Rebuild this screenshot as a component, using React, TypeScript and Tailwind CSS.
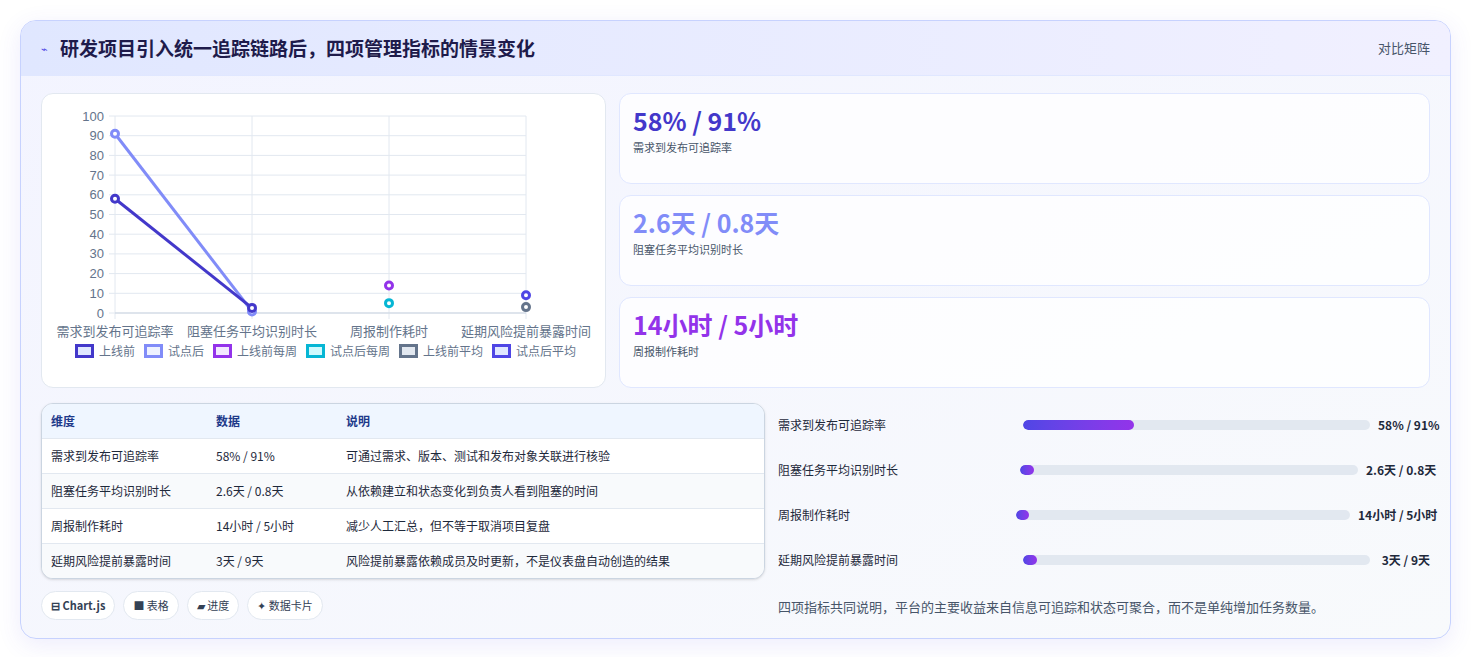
import React from "react";

const F = '"Noto Sans CJK SC", "Noto Sans", sans-serif';

function Chart() {
  const x0 = 73, x1 = 484, yTop = 22, yBot = 219;
  const xs = [73, 210, 347, 484];
  const y = (v: number) => yBot - (v / 100) * (yBot - yTop);
  const ticks = [0, 10, 20, 30, 40, 50, 60, 70, 80, 90, 100];
  const cats = ["需求到发布可追踪率", "阻塞任务平均识别时长", "周报制作耗时", "延期风险提前暴露时间"];
  const pt = (cx: number, v: number, c: string, k: string) => (
    <circle key={k} cx={cx} cy={y(v)} r={3.5} fill="#fff" stroke={c} strokeWidth={3} />
  );
  return (
    <svg width="564" height="250" className="block">
      {ticks.map((t) => (
        <g key={t}>
          <line x1={x0 - 6} x2={x1} y1={y(t)} y2={y(t)} stroke="#e2e8f0" />
          <text x={x0 - 11} y={y(t) + 4.5} textAnchor="end" fontSize="13" fill="#64748b" fontFamily="Liberation Sans, sans-serif">{t}</text>
        </g>
      ))}
      {xs.map((cx, i) => (
        <g key={i}>
          <line x1={cx} x2={cx} y1={yTop} y2={yBot + 6} stroke="#e2e8f0" />
          <text x={cx} y={242} textAnchor="middle" fontSize="13" fill="#64748b" fontFamily={F}>{cats[i]}</text>
        </g>
      ))}
      <line x1={x0} x2={x1} y1={yBot} y2={yBot} stroke="#cbd5e1" />
      <polyline points={`${xs[0]},${y(91)} ${xs[1]},${y(0.8)}`} fill="none" stroke="#818cf8" strokeWidth={3} />
      <polyline points={`${xs[0]},${y(58)} ${xs[1]},${y(2.6)}`} fill="none" stroke="#4338ca" strokeWidth={3} />
      {pt(xs[0], 91, "#818cf8", "a")}
      {pt(xs[1], 0.8, "#818cf8", "b")}
      {pt(xs[0], 58, "#4338ca", "c")}
      {pt(xs[1], 2.6, "#4338ca", "d")}
      {pt(xs[2], 14, "#9333ea", "e")}
      {pt(xs[2], 5, "#06b6d4", "f")}
      {pt(xs[3], 9, "#4f46e5", "g")}
      {pt(xs[3], 3, "#64748b", "h")}
    </svg>
  );
}

const legend = [
  ["上线前", "border-[#4338ca] bg-[#e0e7ff]"],
  ["试点后", "border-[#818cf8] bg-[#eef2ff]"],
  ["上线前每周", "border-[#9333ea] bg-[#f3e8ff]"],
  ["试点后每周", "border-[#06b6d4] bg-[#cffafe]"],
  ["上线前平均", "border-[#64748b] bg-[#e2e8f0]"],
  ["试点后平均", "border-[#4f46e5] bg-[#e0e7ff]"],
];

const rows = [
  ["需求到发布可追踪率", "58% / 91%", "可通过需求、版本、测试和发布对象关联进行核验"],
  ["阻塞任务平均识别时长", "2.6天 / 0.8天", "从依赖建立和状态变化到负责人看到阻塞的时间"],
  ["周报制作耗时", "14小时 / 5小时", "减少人工汇总，但不等于取消项目复盘"],
  ["延期风险提前暴露时间", "3天 / 9天", "风险提前暴露依赖成员及时更新，不是仪表盘自动创造的结果"],
];

const bars = [
  ["需求到发布可追踪率", "58% / 91%", 32, "w-[245px]", "w-[60px]"],
  ["阻塞任务平均识别时长", "2.6天 / 0.8天", 4, "w-[242px]", "w-[72px]"],
  ["周报制作耗时", "14小时 / 5小时", 2, "w-[238px]", "w-[80px]"],
  ["延期风险提前暴露时间", "3天 / 9天", 4, "w-[245px]", "w-[60px]"],
] as const;

export default function App() {
  return (
    <div className="min-h-[657px] bg-white p-5" style={{ fontFamily: F }}>
      <div className="rounded-2xl border border-[#c7d2fe] bg-gradient-to-br from-[#f3f4ff] to-[#f8fafc] shadow-[0_6px_24px_rgba(79,70,229,0.10)] overflow-hidden">
        <div className="h-[55px] flex items-center justify-between px-5 bg-gradient-to-r from-[#e0e7ff] to-[#f1f0ff] border-b border-[#e0e7ff]">
          <div className="flex items-center gap-3">
            <span className="text-[#4f46e5] text-[11px]">⌁</span>
            <span className="text-[19px] font-bold text-[#1e1b4b]">研发项目引入统一追踪链路后，四项管理指标的情景变化</span>
          </div>
          <span className="text-[13px] text-[#475569]">对比矩阵</span>
        </div>
        <div className="px-5 pt-[17px] pb-[18px]">
          <div className="flex gap-[13px]">
            <div className="w-[565px] h-[295px] rounded-xl border border-[#e2e8f0] bg-white">
              <Chart />
              <div className="flex justify-center gap-[9px] -mt-[2px] pl-1">
                {legend.map(([l, c]) => (
                  <div key={l} className="flex items-center gap-[5px] text-[12px] text-[#64748b]">
                    <span className={`w-[19px] h-[14px] border-[3px] ${c}`} />
                    {l}
                  </div>
                ))}
              </div>
            </div>
            <div className="flex-1 flex flex-col gap-[11px]">
              {[
                ["58% / 91%", "需求到发布可追踪率", "text-[#4338ca]"],
                ["2.6天 / 0.8天", "阻塞任务平均识别时长", "text-[#818cf8]"],
                ["14小时 / 5小时", "周报制作耗时", "text-[#9333ea]"],
              ].map(([v, l, c]) => (
                <div key={l} className="h-[91px] rounded-xl border border-[#e0e7ff] bg-white/80 px-[13px] pt-[9px]">
                  <div className={`text-[25px] font-bold leading-[34px] ${c}`}>{v}</div>
                  <div className="text-[11px] text-[#475569] mt-[2px]">{l}</div>
                </div>
              ))}
            </div>
          </div>
          <div className="flex gap-[13px] mt-[15px]">
            <div className="w-[724px]">
              <div className="rounded-xl border border-[#cbd5e1] overflow-hidden bg-white shadow-sm">
                <table className="w-full text-[12px] border-collapse">
                  <thead>
                    <tr className="bg-[#eff6ff] text-[#1e3a8a] font-bold h-[34px] text-left">
                      <th className="pl-[9px] w-[174px] font-bold">维度</th>
                      <th className="w-[130px] font-bold">数据</th>
                      <th className="font-bold">说明</th>
                    </tr>
                  </thead>
                  <tbody>
                    {rows.map((r, i) => (
                      <tr key={i} className={`h-[35px] border-t border-[#e2e8f0] text-[#1e293b] ${i % 2 ? "bg-[#f8fafc]" : "bg-white"}`}>
                        <td className="pl-[9px]">{r[0]}</td>
                        <td>{r[1]}</td>
                        <td>{r[2]}</td>
                      </tr>
                    ))}
                  </tbody>
                </table>
              </div>
              <div className="flex gap-[8px] mt-[12px]">
                {["⊟ Chart.js", "■ 表格", "▰ 进度", "✦ 数据卡片"].map((t, i) => (
                  <span key={t} className={`h-[29px] flex items-center px-[9px] rounded-full border border-[#e2e8f0] bg-white text-[11px] text-[#334155] ${i === 0 ? "font-bold" : ""}`}>{t}</span>
                ))}
              </div>
            </div>
            <div className="flex-1 pl-[0px]">
              {bars.map(([l, v, p, lw, vw]) => (
                <div key={l} className="h-[46px] flex items-center text-[12px] -mt-[1px]">
                  <span className={`${lw} shrink-0 text-[#1e293b]`}>{l}</span>
                  <div className="flex-1 h-[10px] rounded-full bg-[#e2e8f0] overflow-hidden">
                    <div className="h-full rounded-full bg-gradient-to-r from-[#4f46e5] to-[#9333ea] min-w-[13px]" style={{ width: `${p}%` }} />
                  </div>
                  <span className={`${vw} shrink-0 text-right font-bold text-[#1e293b] pl-2 whitespace-nowrap`}>{v}</span>
                </div>
              ))}
              <div className="text-[13px] text-[#475569] mt-[14px]">四项指标共同说明，平台的主要收益来自信息可追踪和状态可聚合，而不是单纯增加任务数量。</div>
            </div>
          </div>
        </div>
      </div>
    </div>
  );
}
